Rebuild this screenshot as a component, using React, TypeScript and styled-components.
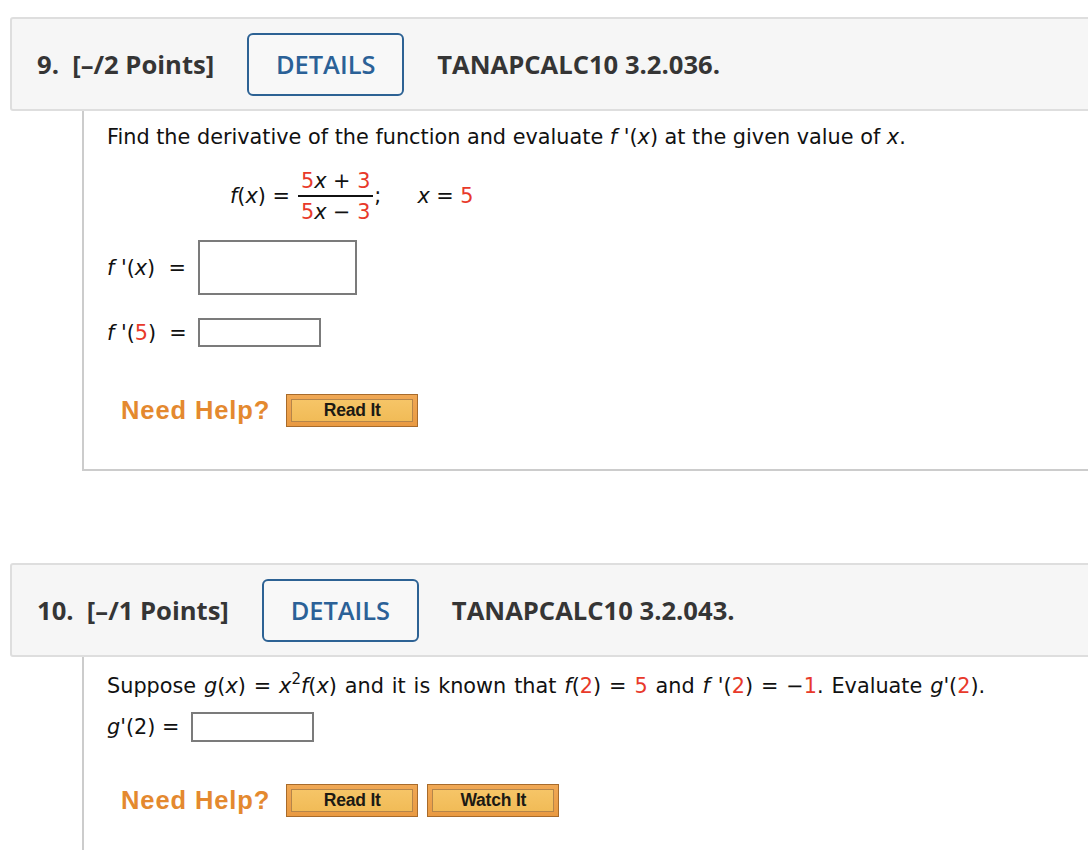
import React from "react";
import styled, { createGlobalStyle } from "styled-components";

const Global = createGlobalStyle`
  html, body { margin: 0; padding: 0; background: #fff; overflow: hidden; }
  body { font-family: "DejaVu Sans", Verdana, sans-serif; color: #111; }
`;

const Page = styled.div`
  width: 1088px;
  padding-top: 17px;
  display: flex;
  flex-direction: column;
`;

const Question = styled.section<{ $gap?: number }>`
  display: flex;
  flex-direction: column;
  margin-bottom: ${(p) => p.$gap ?? 0}px;
`;

const Header = styled.header`
  margin-left: 10px;
  width: 1100px;
  height: 94px;
  box-sizing: border-box;
  border: 2px solid #dedede;
  border-radius: 3px;
  background: #f6f6f6;
  display: flex;
  align-items: center;
  padding-left: 25px;
  gap: 33px;
  font-family: "Open Sans", "Noto Sans", sans-serif;
  font-size: 25.6px;
  font-weight: 700;
  color: #353535;
`;

const Points = styled.span`
  white-space: pre;
`;

const DetailsButton = styled.button`
  box-sizing: border-box;
  height: 63px;
  width: 157px;
  border: 2px solid #2d6294;
  border-radius: 6px;
  background: #f8f8f8;
  font-family: "Open Sans", "Noto Sans", sans-serif;
  font-size: 25.4px;
  font-weight: 600;
  color: #2b6197;
  padding: 0;
`;

const Body = styled.div<{ $top: number; $bottom: number; $noBottom?: boolean }>`
  margin-left: 82px;
  border-left: 2px solid #cccccc;
  border-bottom: ${(p) => (p.$noBottom ? "none" : "2px solid #cccccc")};
  padding: ${(p) => p.$top}px 0 ${(p) => p.$bottom}px 23px;
  display: flex;
  flex-direction: column;
  font-size: 20.8px;
`;

const Prompt = styled.p<{ $wordSpacing?: number }>`
  margin: 0;
  line-height: 22px;
  white-space: nowrap;
  word-spacing: ${(p) => p.$wordSpacing ?? 0}px;
`;

const Red = styled.span`
  color: #e8392a;
`;

const V = styled.i`
  font-style: italic;
`;

const Sup = styled.sup`
  font-size: 15px;
  line-height: 0;
  vertical-align: 9px;
`;

const Formula = styled.div`
  margin-top: 22px;
  margin-left: 123px;
  display: flex;
  align-items: center;
  height: 52px;
`;

const Frac = styled.span`
  display: inline-flex;
  flex-direction: column;
  align-items: center;
  margin: 0 1px 0 8px;
`;

const Num = styled.span`
  padding: 0 3px 3px;
  border-bottom: 2px solid #111;
  line-height: 22px;
`;

const Den = styled.span`
  padding: 4px 3px 0;
  line-height: 22px;
`;

const Eq = styled.span<{ $ml?: number }>`
  white-space: pre;
  margin-left: ${(p) => p.$ml ?? 0}px;
`;

const AnswerRow = styled.div<{ $mt: number; $labelW: number }>`
  margin-top: ${(p) => p.$mt}px;
  display: grid;
  grid-template-columns: ${(p) => p.$labelW}px auto;
  align-items: center;
`;

const Label = styled.span`
  white-space: pre;
`;

const AnswerBox = styled.div<{ $w: number; $h: number }>`
  box-sizing: border-box;
  width: ${(p) => p.$w}px;
  height: ${(p) => p.$h}px;
  border: 2px solid #7b7b7b;
  background: #fff;
`;

const HelpRow = styled.div<{ $mt: number }>`
  margin-top: ${(p) => p.$mt}px;
  margin-left: 14px;
  display: flex;
  align-items: center;
`;

const NeedHelp = styled.span`
  font-family: "Liberation Sans", Arial, sans-serif;
  font-weight: 700;
  font-size: 25.5px;
  letter-spacing: 0.9px;
  color: #e4892f;
  margin-right: 16px;
`;

const HelpButton = styled.button`
  box-sizing: border-box;
  width: 132px;
  height: 33px;
  margin-right: 9px;
  padding: 4px;
  border: 1px solid #a86b2b;
  background: linear-gradient(#f0a855, #e99a42);
  display: flex;
  cursor: pointer;
`;

const HelpInner = styled.span`
  flex: 1;
  display: flex;
  align-items: center;
  justify-content: center;
  border: 1px solid #b5854a;
  background: linear-gradient(#f6c567, #f1bb57);
  font-family: "Liberation Sans", Arial, sans-serif;
  font-weight: 700;
  font-size: 17.5px;
  color: #1c1a14;
  letter-spacing: -0.2px;
`;

function Help({ watch }: { watch?: boolean }) {
  return (
    <HelpRow $mt={watch ? 42 : 47}>
      <NeedHelp>Need Help?</NeedHelp>
      <HelpButton>
        <HelpInner>Read It</HelpInner>
      </HelpButton>
      {watch && (
        <HelpButton>
          <HelpInner>Watch It</HelpInner>
        </HelpButton>
      )}
    </HelpRow>
  );
}

export default function App() {
  return (
    <>
      <Global />
      <Page>
        <Question $gap={92}>
          <Header>
            <Points>9.  [–/2 Points]</Points>
            <DetailsButton>DETAILS</DetailsButton>
            <span>TANAPCALC10 3.2.036.</span>
          </Header>
          <Body $top={15} $bottom={42}>
            <Prompt>
              Find the derivative of the function and evaluate <V>f</V> '(<V>x</V>) at the given value of <V>x</V>.
            </Prompt>
            <Formula>
              <Eq>
                <V>f</V>(<V>x</V>) =
              </Eq>
              <Frac>
                <Num>
                  <Red>5</Red>
                  <V>x</V> + <Red>3</Red>
                </Num>
                <Den>
                  <Red>5</Red>
                  <V>x</V> − <Red>3</Red>
                </Den>
              </Frac>
              <Eq>;</Eq>
              <Eq $ml={36}>
                <V>x</V> = <Red>5</Red>
              </Eq>
            </Formula>
            <AnswerRow $mt={18} $labelW={91}>
              <Label>
                <V>f</V> '(<V>x</V>)  =
              </Label>
              <AnswerBox $w={159} $h={55} />
            </AnswerRow>
            <AnswerRow $mt={23} $labelW={91}>
              <Label>
                <V>f</V> '(<Red>5</Red>)  =
              </Label>
              <AnswerBox $w={123} $h={29} />
            </AnswerRow>
            <Help />
          </Body>
        </Question>
        <Question>
          <Header>
            <Points>10.  [–/1 Points]</Points>
            <DetailsButton>DETAILS</DetailsButton>
            <span>TANAPCALC10 3.2.043.</span>
          </Header>
          <Body $top={18} $bottom={60} $noBottom>
            <Prompt $wordSpacing={1.3}>
              Suppose <V>g</V>(<V>x</V>) = <V>x</V>
              <Sup>2</Sup>
              <V>f</V>(<V>x</V>) and it is known that <V>f</V>(<Red>2</Red>) = <Red>5</Red> and <V>f</V> '(<Red>2</Red>) = −<Red>1</Red>. Evaluate <V>g</V>'(<Red>2</Red>).
            </Prompt>
            <AnswerRow $mt={15} $labelW={84}>
              <Label>
                <V>g</V>'(2) =
              </Label>
              <AnswerBox $w={123} $h={30} />
            </AnswerRow>
            <Help watch />
          </Body>
        </Question>
      </Page>
    </>
  );
}
